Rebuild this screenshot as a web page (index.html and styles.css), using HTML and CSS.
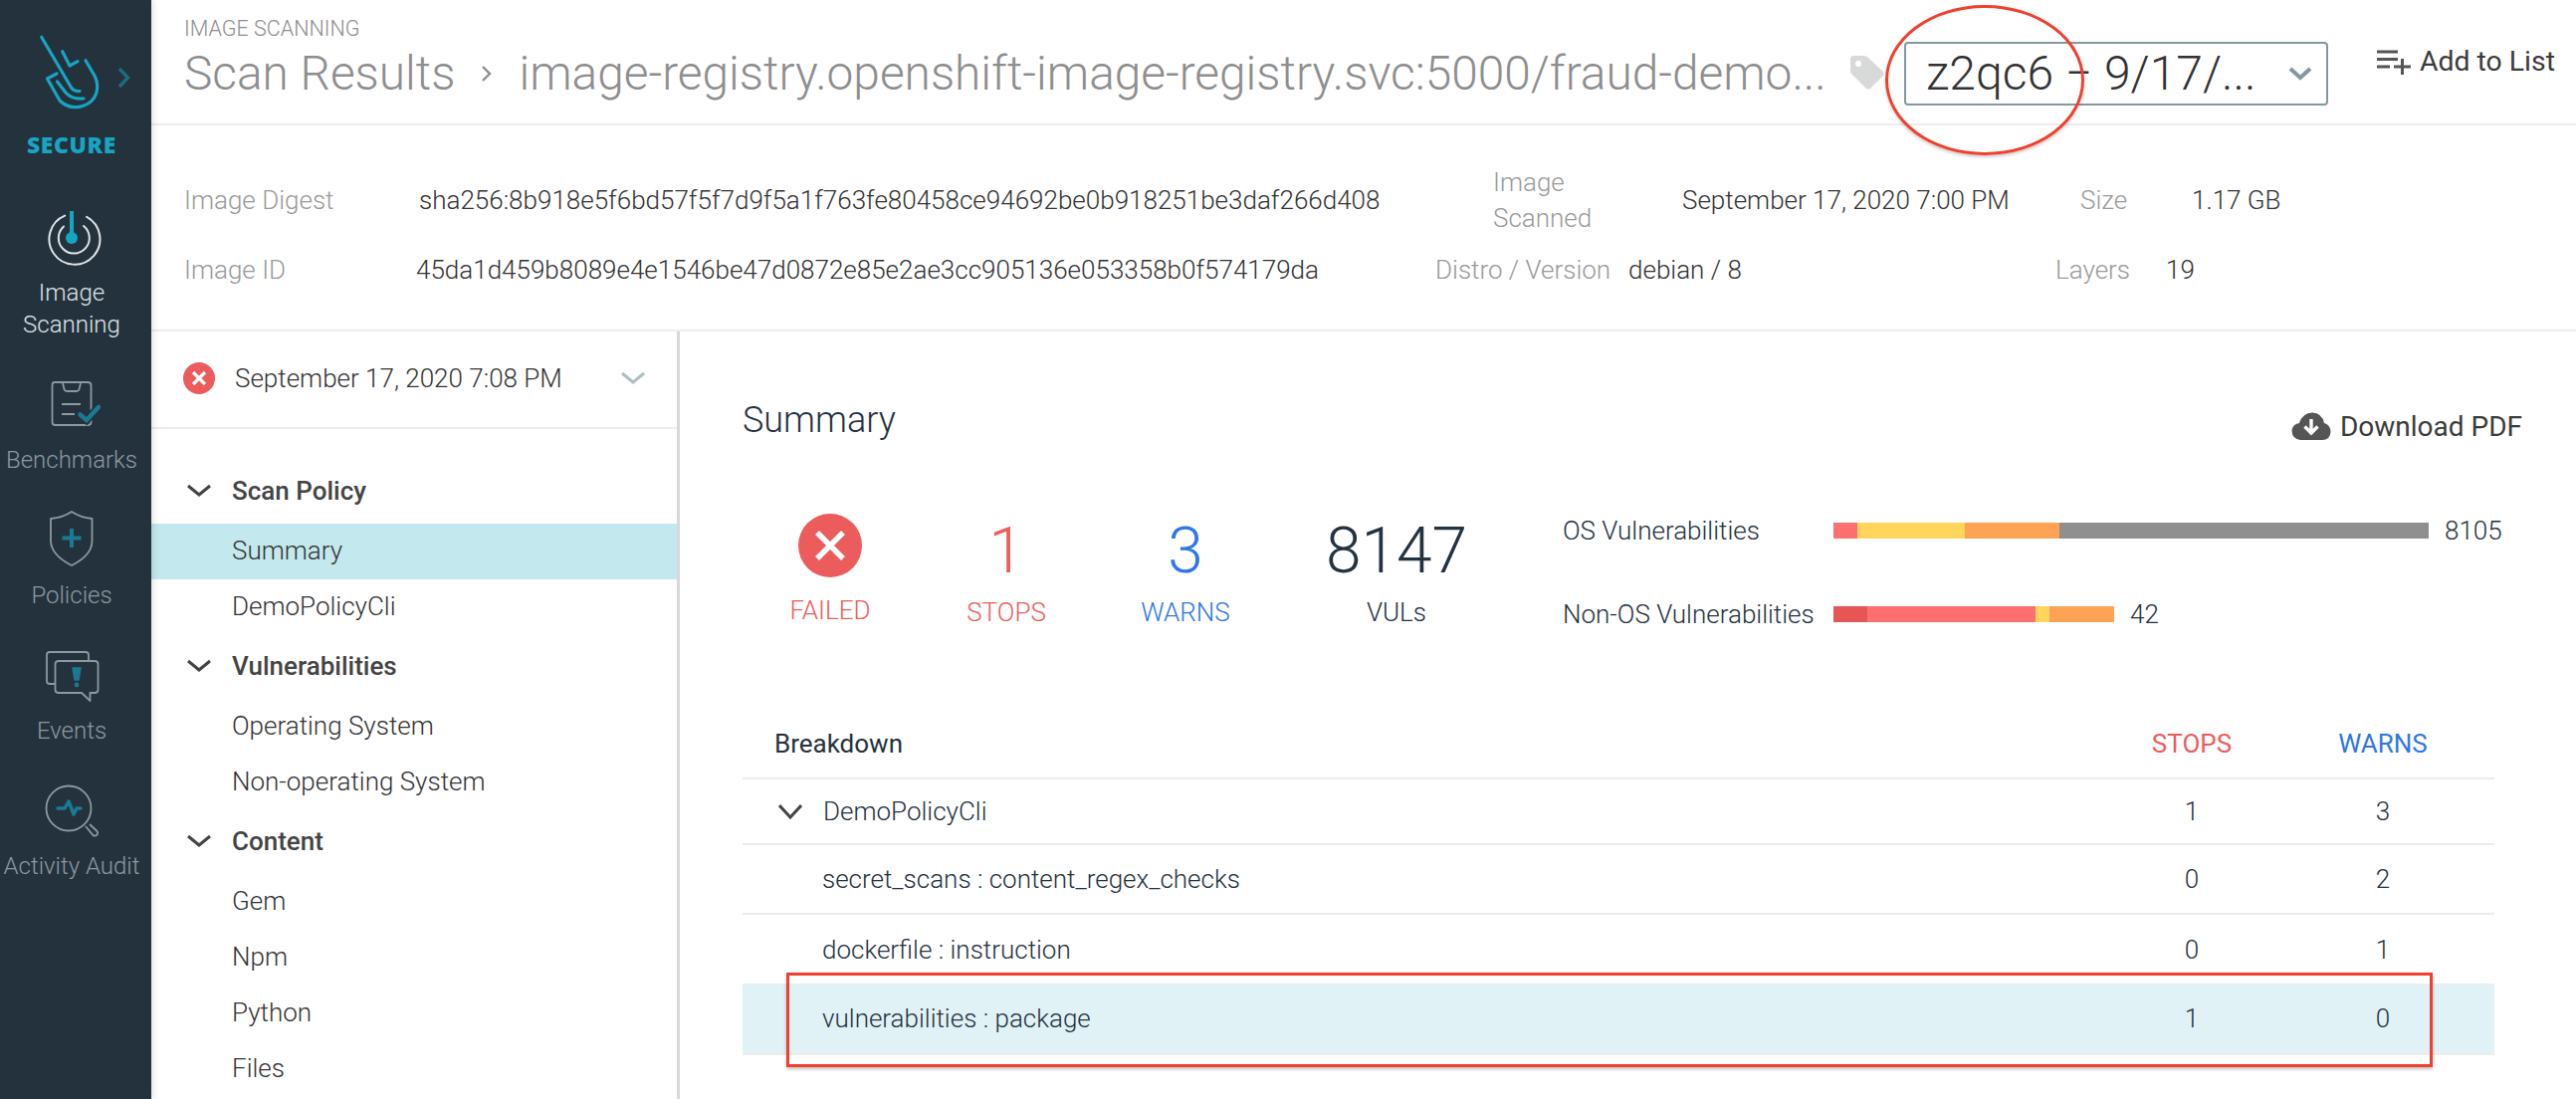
FILE: index.html
```html
<!DOCTYPE html>
<html lang="en">
<head>
<meta charset="utf-8">
<title>Scan Results</title>
<link rel="stylesheet" href="styles.css">
</head>
<body>
<div class="app">
  <aside class="side">
    <div class="brand">
      <svg class="logo" width="152" height="126" viewBox="0 0 152 126" fill="none">
        <g stroke="#16a5c3" stroke-width="3.2" stroke-linecap="round" stroke-linejoin="round">
          <path d="M41.7 37.3L71 87Q73.5 92 80 91.5"/>
          <path d="M62.7 51.7L70 66L78 61.7"/>
          <path d="M86 60.7L95 76C100 86 98 97 90 103C80 110 68 109 60 101L47.5 79L57 74"/>
          <path d="M57.5 82L66 93Q72 100 84 99"/>
        </g>
        <path d="M120 69L128.5 78L120 87" stroke="#1b6c82" stroke-width="3.4"/>
      </svg>
      <div class="brand-name">SECURE</div>
    </div>
    <a class="side-item active">
      <svg width="152" height="56" viewBox="0 0 152 56" fill="none">
        <path d="M64 5A25.5 25.5 0 1 0 86 5" stroke="#dfe4e8" stroke-width="2" stroke-linecap="round" transform="rotate(3 72 27)"/>
        <path d="M64 15.5A15.5 15.5 0 1 0 84 15" stroke="#dfe4e8" stroke-width="2" stroke-linecap="round"/>
        <path d="M72 0V26" stroke="#16a5c3" stroke-width="4"/>
        <circle cx="72" cy="27" r="6" fill="#16a5c3"/>
      </svg>
      <span class="side-label">Image<br>Scanning</span>
    </a>
    <a class="side-item">
      <svg width="152" height="56" viewBox="0 0 152 56" fill="none">
        <path d="M55 7H88Q91.5 7 91.5 10V47Q91.5 50 88 50H55.5Q52.5 50 52.5 47V10Q52.5 7 55 7Z" stroke="#8c99a2" stroke-width="1.8"/>
        <path d="M63 8L64.5 14Q65 16 67 16H77Q79 16 79.5 14L81 8" stroke="#8c99a2" stroke-width="1.8"/>
        <path d="M62 29H81M62 39H75" stroke="#8c99a2" stroke-width="1.8"/>
        <path d="M80 39L87 45L99 32" stroke="#24323d" stroke-width="8"/>
        <path d="M80.5 39.5L87 45L99 32" stroke="#1b7a93" stroke-width="4.5" stroke-linecap="round"/>
      </svg>
      <span class="side-label">Benchmarks</span>
    </a>
    <a class="side-item">
      <svg width="152" height="56" viewBox="0 0 152 56" fill="none">
        <path d="M72 1Q63 7 51 8V31Q52 45 72 55Q92 45 92.5 31V8Q81 7 72 1Z" stroke="#8c99a2" stroke-width="1.8" stroke-linejoin="round"/>
        <path d="M72 18V37M62.5 27.5H81.5" stroke="#1b7a93" stroke-width="4"/>
      </svg>
      <span class="side-label">Policies</span>
    </a>
    <a class="side-item">
      <svg width="152" height="56" viewBox="0 0 152 56" fill="none">
        <path d="M55 38H50Q47 38 47 35V9Q47 6 50 6H86Q89 6 89 9V14" stroke="#8c99a2" stroke-width="1.8"/>
        <path d="M59 15H95Q98.5 15 98.5 18V44Q98.5 47 95 47H90.5V55L82 47H59Q55.5 47 55.5 44V18Q55.5 15 59 15Z" stroke="#8c99a2" stroke-width="1.8" stroke-linejoin="round"/>
        <path d="M73 22H81L79 34H75Z" fill="#1b7a93" stroke="#1b7a93" stroke-linejoin="round" stroke-width="1.5"/>
        <circle cx="77" cy="39" r="2.4" fill="#1b7a93"/>
      </svg>
      <span class="side-label">Events</span>
    </a>
    <a class="side-item">
      <svg width="152" height="56" viewBox="0 0 152 56" fill="none">
        <circle cx="69" cy="27" r="22.5" stroke="#8c99a2" stroke-width="1.8"/>
        <path d="M86 45L93.5 54Q95.5 55.5 97.5 53.5Q99 51.5 97 49.5L90 43" stroke="#8c99a2" stroke-width="1.8"/>
        <path d="M58 27H65L69 20L74 33L77 27H81" stroke="#1b7a93" stroke-width="3.5" stroke-linejoin="round" stroke-linecap="round"/>
      </svg>
      <span class="side-label">Activity Audit</span>
    </a>
  </aside>

  <main class="main">
    <header class="top">
      <div class="crumbs">
        <div class="eyebrow">IMAGE SCANNING</div>
        <div class="title"><span>Scan Results</span><svg class="title-sep" width="20" height="24" viewBox="0 0 20 24" fill="none"><path d="M6 5L13 12L6 19" stroke="#8e8e8e" stroke-width="2.4"/></svg><span>image-registry.openshift-image-registry.svc:5000/fraud-demo...</span></div>
      </div>
      <svg class="tag" width="36" height="36" viewBox="0 0 36 36"><path d="M1 4Q1 1 4 1H15Q17 1 18.5 2.5L34 17Q35.5 19 34 21L21 34Q19 35.5 17 34L2 19Q1 18 1 16Z" fill="#d8dad9"/><circle cx="9" cy="9" r="3" fill="#fff"/></svg>
      <div class="select">
        <span class="select-text">z2qc6 − 9/17/...</span>
        <svg width="24" height="14" viewBox="0 0 24 14" fill="none"><path d="M2 2L12 11L22 2" stroke="#84999f" stroke-width="4"/></svg>
      </div>
      <div class="add-list">
        <svg width="36" height="26" viewBox="0 0 36 26" fill="none"><path d="M1 3H22M1 10.5H22M1 18H14M18 18H35M26.5 10V26" stroke="#555" stroke-width="3"/></svg>
        <span>Add to List</span>
      </div>
    </header>

    <section class="info">
      <div class="info-row">
        <span class="k k-digest">Image Digest</span><span class="v v-digest">sha256:8b918e5f6bd57f5f7d9f5a1f763fe80458ce94692be0b918251be3daf266d408</span>
        <span class="k k-scan">Image<br>Scanned</span><span class="v v-scan">September 17, 2020 7:00 PM</span>
        <span class="k k-size">Size</span><span class="v">1.17 GB</span>
      </div>
      <div class="info-row">
        <span class="k k-id">Image ID</span><span class="v v-id">45da1d459b8089e4e1546be47d0872e85e2ae3cc905136e053358b0f574179da</span>
        <span class="k k-distro">Distro / Version</span><span class="v v-distro">debian / 8</span>
        <span class="k k-layers">Layers</span><span class="v">19</span>
      </div>
    </section>

    <div class="body">
      <nav class="nav">
        <div class="scan-date">
          <svg width="32" height="32" viewBox="0 0 32 32"><circle cx="16" cy="16" r="16" fill="#ec5c5c"/><path d="M10 10L22 22M22 10L10 22" stroke="#fff" stroke-width="3.2"/></svg>
          <span>September 17, 2020 7:08 PM</span>
          <svg class="date-chev" width="24" height="14" viewBox="0 0 24 14" fill="none"><path d="M1 2L12 11L23 2" stroke="#aebfc8" stroke-width="3"/></svg>
        </div>
        <div class="nav-list">
          <div class="nav-head"><svg width="24" height="14" viewBox="0 0 24 14" fill="none"><path d="M1 2L12 11L23 2" stroke="#444" stroke-width="3"/></svg>Scan Policy</div>
          <div class="nav-link current">Summary</div>
          <div class="nav-link">DemoPolicyCli</div>
          <div class="nav-head"><svg width="24" height="14" viewBox="0 0 24 14" fill="none"><path d="M1 2L12 11L23 2" stroke="#444" stroke-width="3"/></svg>Vulnerabilities</div>
          <div class="nav-link">Operating System</div>
          <div class="nav-link">Non-operating System</div>
          <div class="nav-head"><svg width="24" height="14" viewBox="0 0 24 14" fill="none"><path d="M1 2L12 11L23 2" stroke="#444" stroke-width="3"/></svg>Content</div>
          <div class="nav-link">Gem</div>
          <div class="nav-link">Npm</div>
          <div class="nav-link">Python</div>
          <div class="nav-link">Files</div>
        </div>
      </nav>

      <section class="panel">
        <div class="panel-head">
          <h2>Summary</h2>
          <div class="download">
            <svg width="40" height="28" viewBox="0 0 40 28"><path d="M9 28Q1 27 0.5 19Q1 12 8 11Q11 1 21 0.5Q31 1 33 11Q39.5 13 39.5 20Q39 27 32 28Z" fill="#555"/><path d="M20 7V20M13.5 14.5L20 21L26.5 14.5" fill="none" stroke="#fff" stroke-width="3.4"/></svg>
            <span>Download PDF</span>
          </div>
        </div>

        <div class="stats">
          <div class="stat s1 red">
            <svg class="stat-icon" width="64" height="66" viewBox="0 0 64 66"><circle cx="32" cy="32" r="32" fill="#ec5c5c"/><path d="M19 19L45 45M45 19L19 45" stroke="#fff" stroke-width="5.5"/></svg>
            <div class="stat-label">FAILED</div>
          </div>
          <div class="stat s2 red"><div class="num">1</div><div class="stat-label">STOPS</div></div>
          <div class="stat s3 blue"><div class="num">3</div><div class="stat-label">WARNS</div></div>
          <div class="stat s4 ink"><div class="num">8147</div><div class="stat-label">VULs</div></div>
          <div class="bars">
            <div class="bar-row">
              <span class="bar-name">OS Vulnerabilities</span>
              <span class="bar"><i class="c1" style="width:24px"></i><i class="c2" style="width:108px"></i><i class="c3" style="width:95px"></i><i class="c4" style="width:371px"></i></span>
              <span class="bar-val">8105</span>
            </div>
            <div class="bar-row">
              <span class="bar-name">Non-OS Vulnerabilities</span>
              <span class="bar"><i class="c0" style="width:34px"></i><i class="c1" style="width:169px"></i><i class="c2" style="width:14px"></i><i class="c3" style="width:65px"></i></span>
              <span class="bar-val">42</span>
            </div>
          </div>
        </div>

        <div class="table">
          <div class="tr th"><span class="name">Breakdown</span><span class="n red">STOPS</span><span class="n blue">WARNS</span></div>
          <div class="tr group"><span class="name"><svg width="24" height="16" viewBox="0 0 24 16" fill="none"><path d="M1 2L12 14L23 2" stroke="#444" stroke-width="3"/></svg>DemoPolicyCli</span><span class="n">1</span><span class="n">3</span></div>
          <div class="tr"><span class="name sub">secret_scans : content_regex_checks</span><span class="n">0</span><span class="n">2</span></div>
          <div class="tr plain"><span class="name sub">dockerfile : instruction</span><span class="n">0</span><span class="n">1</span></div>
          <div class="tr hl"><span class="name sub">vulnerabilities : package</span><span class="n">1</span><span class="n">0</span></div>
        </div>
      </section>
    </div>
  </main>

  <div class="mark-ellipse"></div>
  <div class="mark-rect"></div>
</div>
</body>
</html>
```
FILE: styles.css
```css
* { box-sizing: border-box; }
html, body { margin: 0; height: 100%; }
body { background: #fff; font-family: Roboto, "Liberation Sans", sans-serif; font-weight: 300; color: #253240; overflow: hidden; }
svg { display: block; flex: none; }
.app { position: relative; display: flex; width: 2588px; height: 1104px; overflow: hidden; }

.side { width: 152px; flex: none; background: #24323d; display: flex; flex-direction: column; box-shadow: 2px 0 6px rgba(0,0,0,.12); z-index: 1; }
.brand { height: 206px; }
.brand-name { margin-top: 7px; padding-right: 8px; text-align: center; font-family: "Open Sans", sans-serif; font-weight: 800; font-size: 23px; letter-spacing: .6px; line-height: 24px; color: #17a5c4; }
.side-item { display: block; padding-top: 1px; height: 136px; text-align: center; color: #8c99a2; }
.side-item.active { padding-top: 6px; height: 170px; color: #dfe4e8; }
.side-label { display: block; margin-top: 13px; padding-right: 8px; font-size: 24px; line-height: 32px; white-space: nowrap; }
.active .side-label { margin-top: 10px; }

.main { flex: 1; min-width: 0; display: flex; flex-direction: column; }
.top { height: 126px; flex: none; border-bottom: 2px solid #ececec; display: flex; align-items: flex-start; padding-left: 33px; }
.crumbs { width: 1653px; flex: none; }
.eyebrow { margin-top: 16px; font-size: 21.5px; line-height: 26px; color: #8e8e8e; }
.title { display: flex; align-items: center; margin-top: 3px; font-size: 47.8px; line-height: 58px; color: #8e8e8e; white-space: nowrap; }
.title-sep { margin: 0 22px 0 22px; }
.tag { margin: 55px 0 0 20px; }
.select { margin: 42px 0 0 19px; width: 426px; height: 64px; border: 2px solid #84999f; border-radius: 4px; display: flex; align-items: center; justify-content: space-between; padding: 0 14px 0 20px; font-size: 48px; color: #333; }
.select-text { white-space: nowrap; margin-top: -2px; }
.add-list { margin: 47px 0 0 48px; display: flex; align-items: center; gap: 8px; font-size: 28.4px; line-height: 30px; font-weight: 400; color: #3c3c3c; white-space: nowrap; }

.info { height: 207px; flex: none; border-bottom: 2px solid #ececec; padding: 40px 0 0 33px; font-size: 26px; }
.info-row { display: flex; align-items: center; height: 70px; white-space: nowrap; }
.k { color: #9a9a9a; line-height: 36px; flex: none; }
.v { color: #333; flex: none; }
.k-digest { width: 236px; }
.v-digest { width: 1079px; }
.k-scan { width: 190px; }
.v-scan { width: 400px; }
.k-size { width: 112px; }
.k-id { width: 233px; }
.v-id { width: 1024px; }
.k-distro { width: 194px; }
.v-distro { width: 429px; }
.k-layers { width: 111px; }

.body { flex: 1; min-height: 0; display: flex; }
.nav { width: 531px; flex: none; border-right: 3px solid #d8d8d8; font-size: 26px; font-weight: 400; color: #444; }
.scan-date { height: 98px; border-bottom: 2px solid #ececec; display: flex; align-items: center; padding: 0 32px 2px 32px; font-weight: 300; color: #333; }
.scan-date span { margin-left: 20px; }
.date-chev { margin-left: auto; }
.nav-list { padding-top: 31px; }
.nav-head { height: 56px; margin: 3px 0 5px; display: flex; align-items: center; gap: 21px; padding-left: 36px; font-weight: 500; }
.nav-link { height: 56px; line-height: 54px; padding-left: 81px; font-weight: 300; color: #333; }
.nav-link.current { background: #c3e9ee; }

.panel { flex: 1; min-width: 0; padding: 67px 82px 0 63px; }
.panel-head { display: flex; justify-content: space-between; align-items: center; height: 44px; }
.panel-head h2 { margin: 0; font-size: 36px; line-height: 44px; font-weight: 300; color: #253240; }
.download { display: flex; align-items: center; gap: 9px; margin-top: 12px; margin-right: -28px; font-size: 28px; font-weight: 400; color: #3c3c3c; }

.stats { display: flex; align-items: flex-start; margin-top: 74px; }
.stat { text-align: center; flex: none; }
.s1 { width: 176px; }
.s2 { width: 178px; }
.s3 { width: 182px; }
.s4 { width: 242px; }
.stat-icon { margin: -2px auto 2px; }
.num { height: 66px; padding-top: 3px; font-size: 64px; line-height: 66px; }
.stat-label { margin-top: 16px; font-size: 26px; line-height: 30px; }
.red { color: #ec5c5c; }
.blue { color: #2f76e8; }
.ink { color: #253240; }
.bars { margin: -5px 0 0 46px; display: flex; flex-direction: column; gap: 44px; }
.bar-row { display: flex; align-items: center; height: 40px; font-size: 26px; white-space: nowrap; }
.bar-name { width: 272px; }
.bar { display: flex; height: 16px; }
.bar i { display: block; height: 16px; }
.c0 { background: #e85555; }
.c1 { background: #fe7070; }
.c2 { background: #ffd55c; }
.c3 { background: #fea356; }
.c4 { background: #8f8f8f; }
.bar-val { margin-left: 16px; }

.table { margin-top: 75px; font-size: 26px; }
.tr { display: flex; align-items: center; height: 70px; border-bottom: 2px solid #ececec; }
.th { height: 71px; font-weight: 400; }
.group { height: 66px; }
.plain { height: 69px; border-bottom: 0; }
.hl { height: 72px; background: #e1f2f7; }
.name { flex: 1; display: flex; align-items: center; padding-left: 32px; gap: 21px; }
.sub { padding-left: 80px; }
.group .name { padding-left: 36px; }
.n { width: 160px; text-align: center; flex: none; }
.n:last-child { width: 224px; }

.mark-ellipse { position: absolute; left: 1894px; top: 5px; width: 200px; height: 151px; border: 3px solid #f0402e; border-radius: 50%; box-shadow: 0 2px 3px rgba(0,0,0,.2); z-index: 2; }
.mark-rect { position: absolute; left: 790px; top: 977px; width: 1654px; height: 95px; border: 3px solid #f0402e; box-shadow: 0 2px 3px rgba(0,0,0,.25); z-index: 2; }
```
